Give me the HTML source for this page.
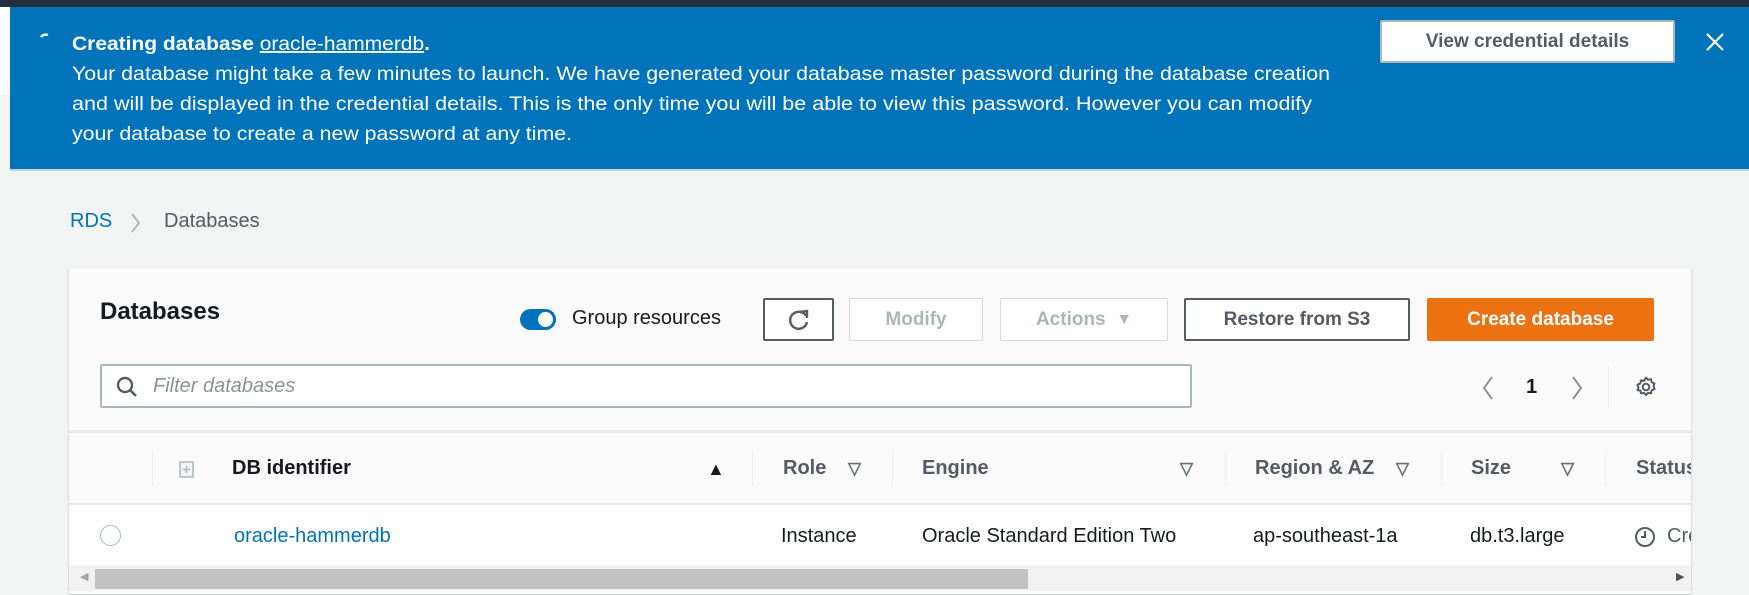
<!DOCTYPE html>
<html><head><meta charset="utf-8">
<style>
*{box-sizing:border-box;margin:0;padding:0}
body{width:1749px;height:595px;overflow:hidden;background:#f2f3f3;font-family:"Liberation Sans",sans-serif;position:relative;color:#16191f}
.a{position:absolute;white-space:nowrap}
.btn{position:absolute;height:43px;border:2px solid #545b64;border-radius:2px;background:#fff;font-weight:bold;font-size:19px;color:#545b64;display:flex;align-items:center;justify-content:center}
.dis{border-color:#d5dbdb;color:#aab7b8;border-width:1px}
.hd{position:absolute;top:457px;font-weight:bold;font-size:20px;color:#16191f}
.ar{position:absolute;top:459px;font-size:17px;color:#687078;font-weight:bold}
.dv{position:absolute;top:452px;width:1px;height:34px;background:#eaeded}
.td{position:absolute;top:525px;font-size:20px;color:#16191f;white-space:nowrap}
</style></head><body>
<div class="a" style="left:0;top:0;width:1749px;height:7px;background:#232f3e"></div>
<div class="a" style="left:0;top:7px;width:10px;height:88px;background:#fff"></div>
<div class="a" style="left:10px;top:7px;width:1739px;height:162px;background:#0073bb"></div>
<div class="a" style="left:10px;top:169px;width:1739px;height:2px;background:#c5d6e3"></div>
<svg class="a" style="left:38px;top:30px" width="16" height="16"><path d="M3 7 A6 6 0 0 1 10 5" stroke="#fff" stroke-width="2.5" fill="none"/></svg>
<svg class="a" style="left:0;top:20px" width="1360" height="130">
<text x="72" y="30" fill="#fff" font-family="Liberation Sans" font-size="19" textLength="358" lengthAdjust="spacingAndGlyphs"><tspan font-weight="bold">Creating database </tspan><tspan text-decoration="underline">oracle-hammerdb</tspan><tspan font-weight="bold">.</tspan></text>
<text x="72" y="60" fill="#fff" font-family="Liberation Sans" font-size="19.5" textLength="1258" lengthAdjust="spacingAndGlyphs">Your database might take a few minutes to launch. We have generated your database master password during the database creation</text>
<text x="72" y="90" fill="#fff" font-family="Liberation Sans" font-size="19.5" textLength="1240" lengthAdjust="spacingAndGlyphs">and will be displayed in the credential details. This is the only time you will be able to view this password. However you can modify</text>
<text x="72" y="120" fill="#fff" font-family="Liberation Sans" font-size="19.5" textLength="500" lengthAdjust="spacingAndGlyphs">your database to create a new password at any time.</text>
</svg>
<div class="btn" style="left:1380px;top:20px;width:295px;border-color:#aab7b8;color:#545b64">View credential details</div>
<svg class="a" style="left:1705px;top:32px" width="20" height="20"><path d="M2 2L18 18M18 2L2 18" stroke="#fff" stroke-width="2.2"/></svg>

<div class="a" style="left:70px;top:210px;font-size:20px;color:#0073bb">RDS</div>
<svg class="a" style="left:130px;top:212px" width="12" height="22"><path d="M2 2L9 11L2 20" stroke="#aab7b8" stroke-width="2" fill="none"/></svg>
<div class="a" style="left:164px;top:210px;font-size:20px;color:#545b64">Databases</div>

<div class="a" style="left:69px;top:268px;width:1622px;height:326px;background:#fafafa;box-shadow:0 1px 2px rgba(0,0,0,.25)"></div>
<div class="a" style="left:100px;top:298px;font-size:24px;font-weight:bold">Databases</div>
<div class="a" style="left:520px;top:309px;width:36px;height:21px;border-radius:11px;background:#0073bb"></div>
<div class="a" style="left:538px;top:312px;width:15px;height:15px;border-radius:50%;background:#fff"></div>
<div class="a" style="left:572px;top:307px;font-size:20px;color:#16191f">Group resources</div>
<div class="btn" style="left:763px;top:298px;width:71px"><svg width="24" height="24"><path d="M19 8A8.5 8.5 0 1 0 20 14" stroke="#545b64" stroke-width="2.4" fill="none"/><path d="M13 4L20 3L20 10" stroke="#545b64" stroke-width="2.4" fill="none"/></svg></div>
<div class="btn dis" style="left:849px;top:298px;width:134px">Modify</div>
<div class="btn dis" style="left:1000px;top:298px;width:168px">Actions&nbsp;&nbsp;<span style="font-size:16px">▼</span></div>
<div class="btn" style="left:1184px;top:298px;width:226px">Restore from S3</div>
<div class="btn" style="left:1427px;top:298px;width:227px;background:#ec7211;border-color:#ec7211;color:#fff">Create database</div>

<div class="a" style="left:100px;top:364px;width:1092px;height:44px;background:#fff;border:2px solid #aab7b8;border-radius:2px"></div>
<svg class="a" style="left:116px;top:376px" width="22" height="22"><circle cx="9" cy="9" r="7" stroke="#545b64" stroke-width="2.4" fill="none"/><path d="M14 14L20 20" stroke="#545b64" stroke-width="2.6"/></svg>
<div class="a" style="left:153px;top:375px;font-size:20px;font-style:italic;color:#879596">Filter databases</div>
<svg class="a" style="left:1481px;top:375px" width="14" height="26"><path d="M11 2L3 13L11 24" stroke="#879596" stroke-width="2" fill="none"/></svg>
<div class="a" style="left:1526px;top:376px;font-size:20px;font-weight:bold">1</div>
<svg class="a" style="left:1570px;top:375px" width="14" height="26"><path d="M3 2L11 13L3 24" stroke="#879596" stroke-width="2" fill="none"/></svg>
<div class="a" style="left:1608px;top:366px;width:1px;height:42px;background:#eaeded"></div>
<svg class="a" style="left:1634px;top:375px" width="24" height="24"><path d="M12 2.5l2 2.3 3-.6.6 3 2.9 1.3-1 2.8 1 2.8-2.9 1.3-.6 3-3-.6-2 2.3-2-2.3-3 .6-.6-3L3.5 15.3l1-2.8-1-2.8 2.9-1.3.6-3 3 .6z" stroke="#545b64" stroke-width="2" fill="none" stroke-linejoin="round"/><circle cx="12" cy="12" r="3.3" stroke="#545b64" stroke-width="2" fill="none"/></svg>

<div class="a" style="left:69px;top:430px;width:1622px;height:3px;background:#eaeded"></div>
<div class="dv" style="left:152px"></div>
<svg class="a" style="left:179px;top:461px" width="16" height="18"><rect x="1" y="1" width="13" height="15" stroke="#aab7b8" fill="#f2f3f3" stroke-width="1.5"/><path d="M7.5 5V12M4 8.5H11" stroke="#aab7b8" stroke-width="1.5"/></svg>
<div class="hd" style="left:232px">DB identifier</div>
<div class="a" style="left:707px;top:459px;font-size:18px">▲</div>
<div class="dv" style="left:752px"></div>
<div class="hd" style="left:783px;color:#545b64">Role</div><div class="ar" style="left:848px">▽</div>
<div class="dv" style="left:892px"></div>
<div class="hd" style="left:922px;color:#545b64">Engine</div><div class="ar" style="left:1180px">▽</div>
<div class="dv" style="left:1225px"></div>
<div class="hd" style="left:1255px;color:#545b64">Region &amp; AZ</div><div class="ar" style="left:1396px">▽</div>
<div class="dv" style="left:1441px"></div>
<div class="hd" style="left:1471px;color:#545b64">Size</div><div class="ar" style="left:1561px">▽</div>
<div class="dv" style="left:1605px"></div>
<div class="hd" style="left:1636px;color:#545b64;width:55px;overflow:hidden">Status</div>

<div class="a" style="left:69px;top:503px;width:1622px;height:62px;background:#fff;border-top:2px solid #eaeded"></div>
<div class="a" style="left:100px;top:525px;width:21px;height:21px;border-radius:50%;border:1.5px solid #aab7b8;background:#fff"></div>
<div class="td" style="left:234px;color:#0073bb">oracle-hammerdb</div>
<div class="td" style="left:781px">Instance</div>
<div class="td" style="left:922px">Oracle Standard Edition Two</div>
<div class="td" style="left:1253px">ap-southeast-1a</div>
<div class="td" style="left:1470px">db.t3.large</div>
<svg class="a" style="left:1634px;top:526px" width="22" height="22"><circle cx="11" cy="11" r="9" stroke="#545b64" stroke-width="2" fill="none"/><path d="M11 5V11H7" stroke="#545b64" stroke-width="2" fill="none"/></svg>
<div class="td" style="left:1667px;color:#545b64;width:24px;overflow:hidden">Creating</div>

<div class="a" style="left:69px;top:566px;width:1622px;height:25px;background:#f1f1f1"></div>
<div class="a" style="left:95px;top:569px;width:933px;height:20px;background:#c1c1c1"></div>
<div class="a" style="left:80px;top:570px;font-size:11px;color:#a3a3a3">◀</div>
<div class="a" style="left:1676px;top:570px;font-size:11px;color:#505050">▶</div>
</body></html>
